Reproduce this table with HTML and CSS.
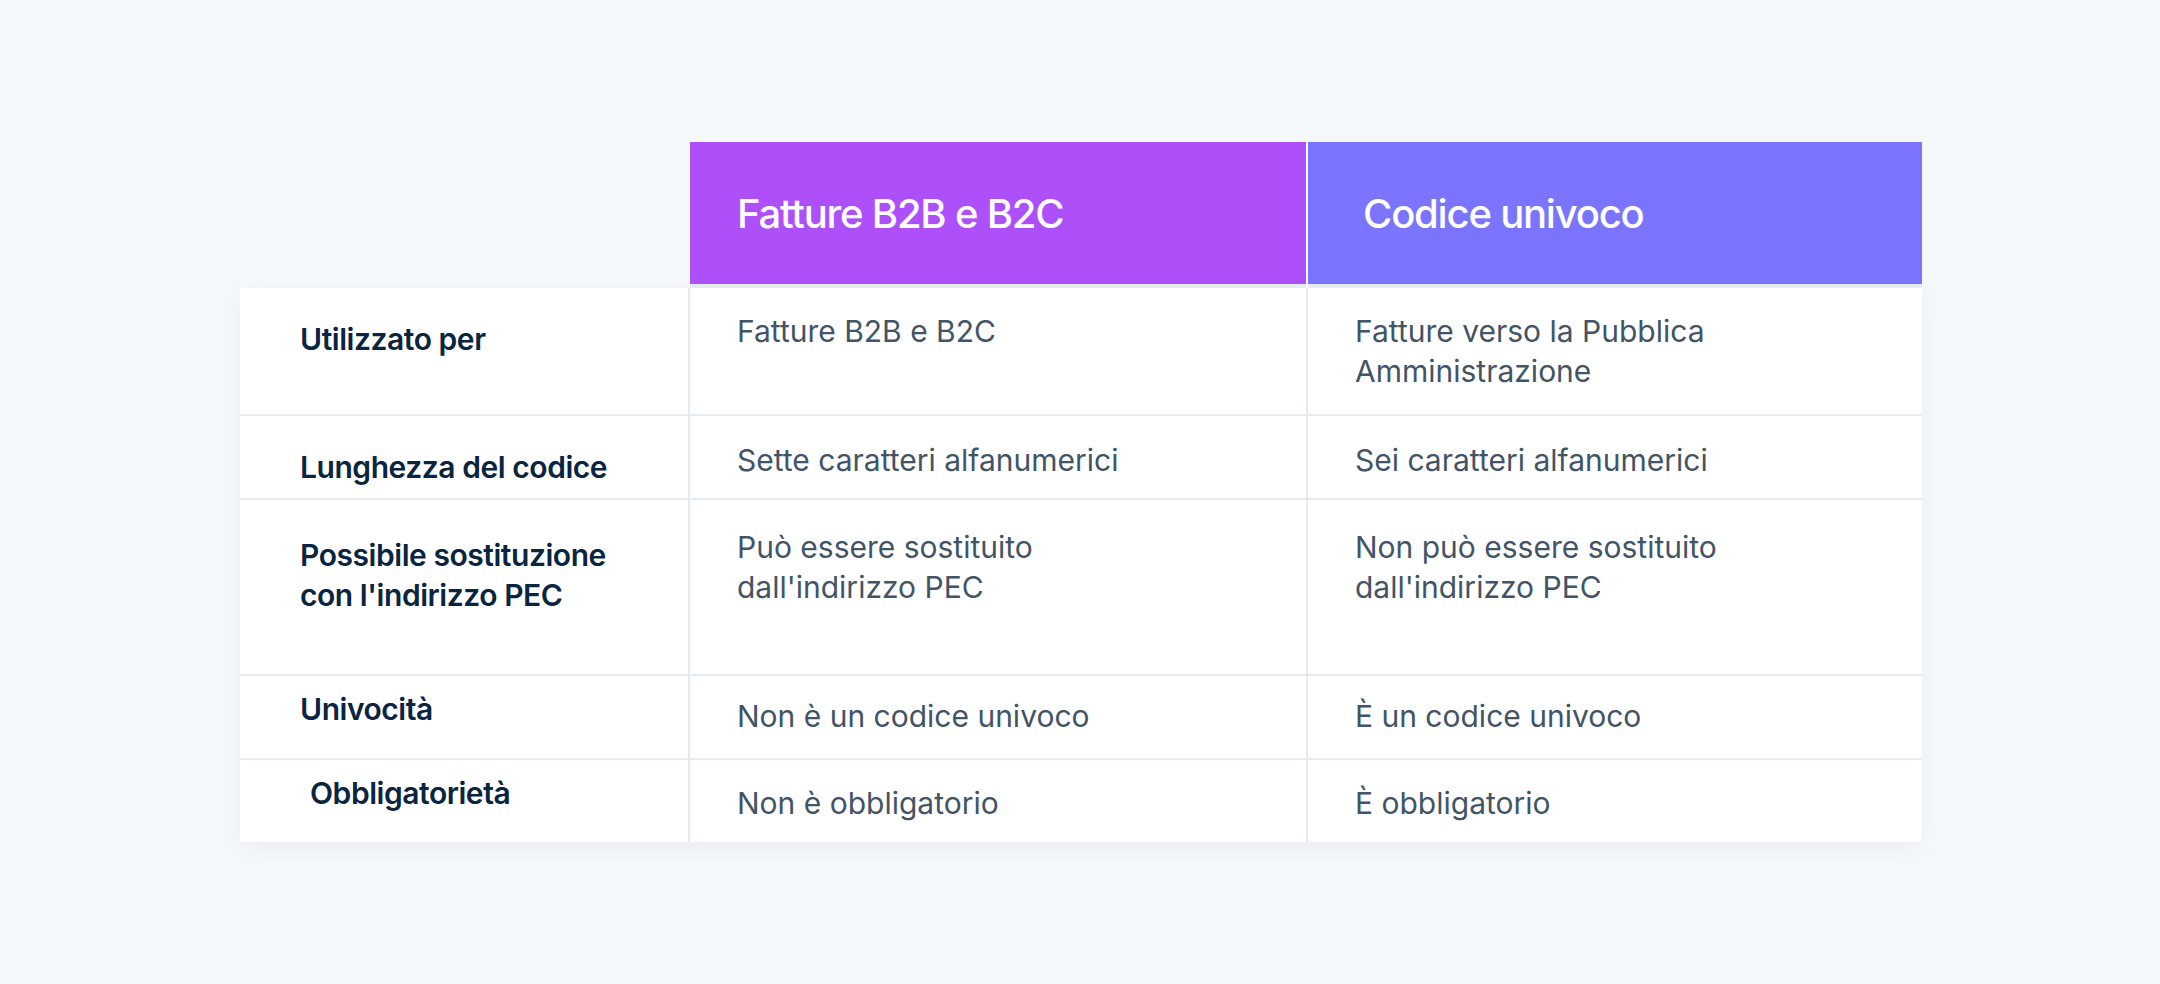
FILE: index.html
```html
<!DOCTYPE html>
<html lang="it">
<head>
<meta charset="utf-8">
<title>Codice destinatario vs codice univoco</title>
<link rel="stylesheet" href="styles.css">
</head>
<body>
<main class="page">
  <div class="table">
    <div class="thead">
      <div class="corner"></div>
      <div class="th th--purple">Fatture B2B e B2C</div>
      <div class="th th--indigo">Codice univoco</div>
    </div>
    <div class="tbody">
      <div class="row row--1">
        <div class="lbl">Utilizzato per</div>
        <div class="val">Fatture B2B e B2C</div>
        <div class="val">Fatture verso la Pubblica<br>Amministrazione</div>
      </div>
      <div class="row row--2">
        <div class="lbl">Lunghezza del codice</div>
        <div class="val">Sette caratteri alfanumerici</div>
        <div class="val">Sei caratteri alfanumerici</div>
      </div>
      <div class="row row--3">
        <div class="lbl">Possibile sostituzione<br>con l'indirizzo PEC</div>
        <div class="val">Può essere sostituito<br>dall'indirizzo PEC</div>
        <div class="val">Non può essere sostituito<br>dall'indirizzo PEC</div>
      </div>
      <div class="row row--4">
        <div class="lbl">Univocità</div>
        <div class="val">Non è un codice univoco</div>
        <div class="val">È un codice univoco</div>
      </div>
      <div class="row row--5">
        <div class="lbl lbl--indent">Obbligatorietà</div>
        <div class="val">Non è obbligatorio</div>
        <div class="val">È obbligatorio</div>
      </div>
    </div>
  </div>
</main>
</body>
</html>
```

FILE: styles.css
```css
* { box-sizing: border-box; }

html, body {
  margin: 0;
  padding: 0;
  background: #f6f9fc;
}

body {
  font-family: Inter, "Noto Sans", "Liberation Sans", sans-serif;
  -webkit-font-smoothing: antialiased;
}

.page {
  min-height: 984px;
  padding: 142px 0 0 240px;
}

.table {
  width: 1682px;
}

.thead {
  display: grid;
  grid-template-columns: 448px 616px 614px;
  column-gap: 2px;
  height: 146px;
}

.th {
  display: flex;
  align-items: center;
  height: 146px;
  border-bottom: 4px solid #e6ebf1;
  color: #ffffff;
  font-size: 40px;
  font-weight: 500;
  letter-spacing: -0.03em;
  padding-left: 47px;
}

.th--purple { background-color: #ad50fa; }

.th--indigo {
  background-color: #7a74ff;
  padding-left: 55px;
  box-shadow: -2px 0 0 #ffffff;
}

.tbody {
  display: flex;
  flex-direction: column;
  gap: 2px;
  background: #e6ebf1;
  box-shadow: 0 6px 24px rgba(50, 50, 93, 0.07);
}

.row {
  display: grid;
  grid-template-columns: 448px 616px 614px;
  column-gap: 2px;
}

.row--1 { height: 126px; }
.row--2 { height: 82px; }
.row--3 { height: 174px; }
.row--4 { height: 82px; }
.row--5 { height: 82px; }

.lbl,
.val {
  background: #ffffff;
  line-height: 40px;
  font-size: 30px;
}

.lbl {
  color: #0a2540;
  font-weight: 600;
  letter-spacing: -0.015em;
  padding-left: 60px;
}

.lbl--indent { padding-left: 70px; }

.val {
  color: #425466;
  font-weight: 400;
  letter-spacing: 0;
  padding-left: 47px;
}

.row--1 .lbl { padding-top: 31px; }
.row--1 .val { padding-top: 23px; }
.row--2 .lbl { padding-top: 31px; }
.row--2 .val { padding-top: 24px; }
.row--3 .lbl { padding-top: 35px; }
.row--3 .val { padding-top: 27px; }
.row--4 .lbl { padding-top: 13px; }
.row--4 .val { padding-top: 20px; }
.row--5 .lbl { padding-top: 13px; }
.row--5 .val { padding-top: 23px; }
```
